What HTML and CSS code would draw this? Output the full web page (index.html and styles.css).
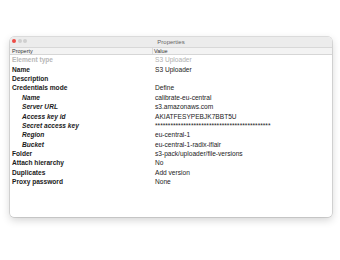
FILE: index.html
```html
<!DOCTYPE html>
<html>
<head>
<meta charset="utf-8">
<link rel="stylesheet" href="styles.css">
</head>
<body>
<div class="window">
  <div class="titlebar">
    <div class="lights"><span class="light red"></span><span class="light"></span><span class="light"></span></div>
    <div class="title">Properties</div>
  </div>
  <div class="header">
    <div class="hcell prop">Property</div>
    <div class="hcell val">Value</div>
  </div>
  <div class="rows">
    <div class="row dim"><div class="k">Element type</div><div class="v">S3 Uploader</div></div>
    <div class="row"><div class="k">Name</div><div class="v">S3 Uploader</div></div>
    <div class="row"><div class="k">Description</div><div class="v"></div></div>
    <div class="row"><div class="k">Credentials mode</div><div class="v">Define</div></div>
    <div class="row sub"><div class="k">Name</div><div class="v">calibrate-eu-central</div></div>
    <div class="row sub"><div class="k">Server URL</div><div class="v">s3.amazonaws.com</div></div>
    <div class="row sub"><div class="k">Access key id</div><div class="v">AKIATFESYPEBJK7BBT5U</div></div>
    <div class="row sub"><div class="k">Secret access key</div><div class="v">*********************************************</div></div>
    <div class="row sub"><div class="k">Region</div><div class="v">eu-central-1</div></div>
    <div class="row sub"><div class="k">Bucket</div><div class="v">eu-central-1-radix-iflair</div></div>
    <div class="row"><div class="k">Folder</div><div class="v">s3-pack/uploader/file-versions</div></div>
    <div class="row"><div class="k">Attach hierarchy</div><div class="v">No</div></div>
    <div class="row"><div class="k">Duplicates</div><div class="v">Add version</div></div>
    <div class="row"><div class="k">Proxy password</div><div class="v">None</div></div>
  </div>
</div>
</body>
</html>
```
FILE: styles.css
```css
html, body { margin: 0; padding: 0; background: #ffffff; }
body {
  width: 340px; height: 260px;
  font-family: "Liberation Sans", Arial, sans-serif;
  color: #1a1a1a;
  padding-top: 37px;
  padding-left: 10px;
  box-sizing: border-box;
}
.window {
  width: 322px; height: 180px;
  background: #fff;
  border-radius: 4px;
  box-shadow: 0 0 0 0.5px rgba(0,0,0,0.22), 0 3px 8px rgba(0,0,0,0.18);
  overflow: hidden;
  display: flex; flex-direction: column;
}
.titlebar {
  height: 10px;
  background: #ececec;
  position: relative;
  display: flex; align-items: center; justify-content: center;
  border-bottom: 1px solid #d8d8d8;
}
.lights {
  position: absolute; left: 2px; top: 2px;
  display: flex; gap: 1.6px;
}
.light { width: 4px; height: 4px; border-radius: 50%; background: #cfcfcf; }
.light.red { background: #ee4b45; }
.title { font-size: 6px; color: #666; }
.header {
  display: flex; height: 6px;
  background: #f3f3f3;
  border-bottom: 1px solid #d6d6d6;
  font-size: 5.5px; color: #333;
  align-items: center;
}
.hcell { line-height: 6px; }
.hcell.prop { width: 140px; padding-left: 2px; border-right: 1px solid #dcdcdc; }
.hcell.val { padding-left: 1px; }
.row { display: flex; height: 9.4px; align-items: center; font-size: 6.6px; }
.row .k { width: 142px; padding-left: 2px; font-weight: bold; color: #1a1a1a; }
.row .v { padding-left: 1px; color: #222; }
.row.sub .k { padding-left: 12px; width: 132px; font-style: italic; }
.row.dim .k { color: #b8b8b8; font-weight: bold; }
.row.dim .v { color: #b0b0b0; }
```
